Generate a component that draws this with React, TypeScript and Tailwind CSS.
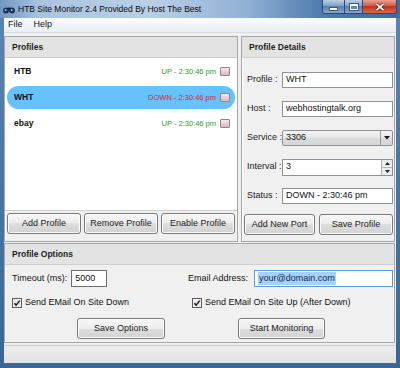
import React from "react";

type Row = { name: string; status: string; up: boolean; sel?: boolean };

const rows: Row[] = [
  { name: "HTB", status: "UP - 2:30:46 pm", up: true },
  { name: "WHT", status: "DOWN - 2:30:46 pm", up: false, sel: true },
  { name: "ebay", status: "UP - 2:30:46 pm", up: true },
];

function Btn({ children, className = "" }: { children: React.ReactNode; className?: string }) {
  return (
    <div
      className={`flex items-center justify-center rounded-[3px] border border-[#7a7a7a] bg-[linear-gradient(to_bottom,#f6f6f6_0%,#ededed_50%,#dedede_50%,#d2d2d2_100%)] text-[9px] text-[#1a1a1a] shadow-[inset_0_0_0_1px_#fbfbfb] ${className}`}
    >
      {children}
    </div>
  );
}

function Panel({ title, className = "", children }: { title: string; className?: string; children: React.ReactNode }) {
  return (
    <div className={`flex flex-col border border-[#a6a6a6] bg-[#f0f0f0] shadow-[inset_1px_1px_0_#ffffff] ${className}`}>
      <div className="flex h-[21px] shrink-0 items-center border-b border-[#cfcfcf] bg-[#e3e3e3] pl-[7px] text-[8.5px] font-bold text-[#1e1e1e]">
        {title}
      </div>
      {children}
    </div>
  );
}

function Field({ label, children }: { label: string; children: React.ReactNode }) {
  return (
    <div className="flex h-[16px] items-center">
      <div className="w-[35px] shrink-0 text-[9px] text-[#1a1a1a]">{label}</div>
      {children}
    </div>
  );
}

function Check() {
  return (
    <svg width="10" height="10" viewBox="0 0 10 10" className="shrink-0">
      <rect x="0.5" y="0.5" width="9" height="9" fill="#fdfdfd" stroke="#5a5a5a" />
      <rect x="1.5" y="1.5" width="7" height="7" fill="#e6e6e6" />
      <path d="M2.3 5.2 L4.1 7.1 L7.8 2.6" fill="none" stroke="#1c1c1c" strokeWidth="1.4" />
    </svg>
  );
}

function ListBox() {
  return (
    <div className="h-[9px] w-[10px] shrink-0 rounded-[1px] border border-[#9a8088] bg-[linear-gradient(to_bottom,#f7eaed,#d6b9bf)]" />
  );
}

export default function App() {
  return (
    <div className="flex h-[368px] w-[400px] flex-col bg-[linear-gradient(to_bottom,#5b84b3,#3b6694)] font-['Liberation_Sans',Arial,sans-serif]">
      {/* title bar */}
      <div className="relative flex h-[18px] shrink-0 items-center bg-[linear-gradient(to_right,#7096c1_0%,#aac4e0_10%,#b9cfe7_38%,#90b0d5_62%,#4f7cae_80%,#3f6b9d_100%)] pl-[3px]">
        <svg width="12" height="9" viewBox="0 0 12 9" className="mr-[3px]">
          <circle cx="3" cy="5.5" r="2.6" fill="#1f3b66" stroke="#0e1e38" strokeWidth="0.8" />
          <circle cx="9" cy="5.5" r="2.6" fill="#1f3b66" stroke="#0e1e38" strokeWidth="0.8" />
          <rect x="4.5" y="2.5" width="3" height="2" fill="#0e1e38" />
          <circle cx="2.6" cy="5" r="0.9" fill="#9cc3ee" />
          <circle cx="8.6" cy="5" r="0.9" fill="#9cc3ee" />
        </svg>
        <span className="text-[8.5px] text-[#0a0a0a]">HTB Site Monitor 2.4 Provided By Host The Best</span>
        <div className="absolute right-[3px] top-0 flex h-[14px] overflow-hidden rounded-b-[3px] border border-t-0 border-[#2a4a70]">
          <div className="flex w-[22px] items-center justify-center border-r border-[#2a4a70] bg-[linear-gradient(to_bottom,#b9cde5,#7c9dc4_50%,#5a80ad_50%,#86a8cf)]">
            <div className="mt-[4px] h-[2px] w-[7px] bg-white shadow-[0_0_0_1px_#3b5a80]" />
          </div>
          <div className="flex w-[18px] items-center justify-center border-r border-[#2a4a70] bg-[linear-gradient(to_bottom,#b9cde5,#7c9dc4_50%,#5a80ad_50%,#86a8cf)]">
            <div className="h-[6px] w-[8px] border-[1.5px] border-t-[2px] border-white shadow-[0_0_0_1px_#3b5a80]" />
          </div>
          <div className="flex w-[33px] items-center justify-center bg-[linear-gradient(to_bottom,#e8a293,#d0513c_50%,#c03420_50%,#d86a4e)]">
            <svg width="10" height="8" viewBox="0 0 10 8">
              <path d="M1.5 0.8 L8.5 7.2 M8.5 0.8 L1.5 7.2" stroke="#5a1a10" strokeWidth="3" />
              <path d="M1.5 0.8 L8.5 7.2 M8.5 0.8 L1.5 7.2" stroke="#ffffff" strokeWidth="1.8" />
            </svg>
          </div>
        </div>
      </div>

      <div className="mx-[4px] mb-[5px] flex flex-1 flex-col bg-[#f0f0f0]">
        {/* menu */}
        <div className="flex h-[15px] shrink-0 items-center gap-[11px] border-b border-[#d8dde4] bg-[linear-gradient(to_bottom,#fbfcfe,#e9eef5)] pl-[4px] text-[9px] text-[#111]">
          <span>File</span>
          <span>Help</span>
        </div>

        <div className="mt-[3px] flex h-[206px] shrink-0 gap-[3px] pr-[1px]">
          <Panel title="Profiles" className="w-[234px]">
            <div className="flex flex-1 flex-col bg-white">
              {rows.map((r) => (
                <div key={r.name} className="h-[26px] px-[2px] pb-[1px] pt-[2px]">
                  <div
                    className={`flex h-[23px] items-center rounded-full pl-[7px] pr-[5px] ${r.sel ? "bg-[#66c1fc]" : ""}`}
                  >
                    <span className="text-[8.5px] font-bold text-[#111]">{r.name}</span>
                    <span className={`ml-auto mr-[4px] text-[7.5px] ${r.up ? "text-[#2f9a2f]" : "text-[#e0222a]"}`}>
                      {r.status}
                    </span>
                    <ListBox />
                  </div>
                </div>
              ))}
            </div>
            <div className="flex h-[31px] shrink-0 gap-[3px] border-t border-[#d0d0d0] px-[2px] pt-[2px]">
              <Btn className="h-[21px] flex-1">Add Profile</Btn>
              <Btn className="h-[21px] flex-1">Remove Profile</Btn>
              <Btn className="h-[21px] flex-1">Enable Profile</Btn>
            </div>
          </Panel>

          <Panel title="Profile Details" className="flex-1">
            <div className="flex flex-col gap-[13px] pl-[5px] pr-[1px] pt-[14px]">
              <Field label="Profile :">
                <div className="flex h-[16px] flex-1 items-center border border-[#8e9298] bg-white pl-[3px] text-[9px] text-[#111]">WHT</div>
              </Field>
              <Field label="Host :">
                <div className="flex h-[16px] flex-1 items-center border border-[#8e9298] bg-white pl-[3px] text-[9px] text-[#111]">webhostingtalk.org</div>
              </Field>
              <Field label="Service :">
                <div className="flex h-[16px] flex-1 items-center rounded-[2px] border border-[#8e9298] bg-[linear-gradient(to_bottom,#f4f4f4,#e6e6e6_50%,#dcdcdc_50%,#d6d6d6)] text-[9px] text-[#111]">
                  <span className="flex-1 pl-[3px]">3306</span>
                  <div className="flex h-full w-[12px] items-center justify-center border-l border-[#9a9a9a]">
                    <svg width="6" height="4" viewBox="0 0 6 4">
                      <path d="M0 0 L6 0 L3 3.5 Z" fill="#1a1a1a" />
                    </svg>
                  </div>
                </div>
              </Field>
              <Field label="Interval :">
                <div className="flex h-[17px] flex-1 items-center border border-[#8e9298] bg-white text-[9px] text-[#111]">
                  <span className="flex-1 pl-[3px]">3</span>
                  <div className="flex h-full w-[11px] flex-col border-l border-[#b0b0b0] bg-[#ececec]">
                    <div className="flex flex-1 items-center justify-center border-b border-[#b8b8b8]">
                      <svg width="5" height="3" viewBox="0 0 5 3">
                        <path d="M0 3 L5 3 L2.5 0 Z" fill="#222" />
                      </svg>
                    </div>
                    <div className="flex flex-1 items-center justify-center">
                      <svg width="5" height="3" viewBox="0 0 5 3">
                        <path d="M0 0 L5 0 L2.5 3 Z" fill="#222" />
                      </svg>
                    </div>
                  </div>
                </div>
              </Field>
              <Field label="Status :">
                <div className="flex h-[16px] flex-1 items-center border border-[#8e9298] bg-white pl-[3px] text-[9px] text-[#111]">DOWN - 2:30:46 pm</div>
              </Field>
            </div>
            <div className="mt-auto flex gap-[4px] pb-[6px] pl-[2px] pr-[1px]">
              <Btn className="h-[21px] w-[71px]">Add New Port</Btn>
              <Btn className="h-[21px] flex-1">Save Profile</Btn>
            </div>
          </Panel>
        </div>

        <Panel title="Profile Options" className="mr-[1px] mt-[1px] h-[100px] shrink-0">
          <div className="flex flex-col pl-[7px] pr-[1px] pt-[5px]">
            <div className="flex h-[17px] items-center text-[9px] text-[#111]">
              <div className="flex w-[176px] items-center">
                <span>Timeout (ms):</span>
                <div className="ml-[4px] flex h-[17px] w-[36px] items-center border border-[#6a6e74] bg-white pl-[3px]">5000</div>
              </div>
              <span>Email Address:</span>
              <div className="ml-[6px] flex h-[17px] flex-1 items-center border border-[#5a9ad6] bg-white pl-[3px]">
                <span className="bg-[#a9d1f7] px-[1px] text-[#0d2a55]">your@domain.com</span>
              </div>
            </div>
            <div className="mt-[10px] flex h-[12px] items-center text-[9px] text-[#111]">
              <div className="flex w-[180px] items-center gap-[3px]">
                <Check />
                <span>Send EMail On Site Down</span>
              </div>
              <div className="flex items-center gap-[3px]">
                <Check />
                <span>Send EMail On Site Up (After Down)</span>
              </div>
            </div>
            <div className="mt-[9px] flex pl-[65px]">
              <Btn className="h-[21px] w-[88px]">Save Options</Btn>
              <Btn className="ml-[73px] h-[21px] w-[87px]">Start Monitoring</Btn>
            </div>
          </div>
        </Panel>

        {/* status bar */}
        <div className="mt-[2px] flex-1 border-t border-[#c9c9c9] bg-[linear-gradient(to_bottom,#ececec,#e2e2e2)]" />
      </div>
    </div>
  );
}
